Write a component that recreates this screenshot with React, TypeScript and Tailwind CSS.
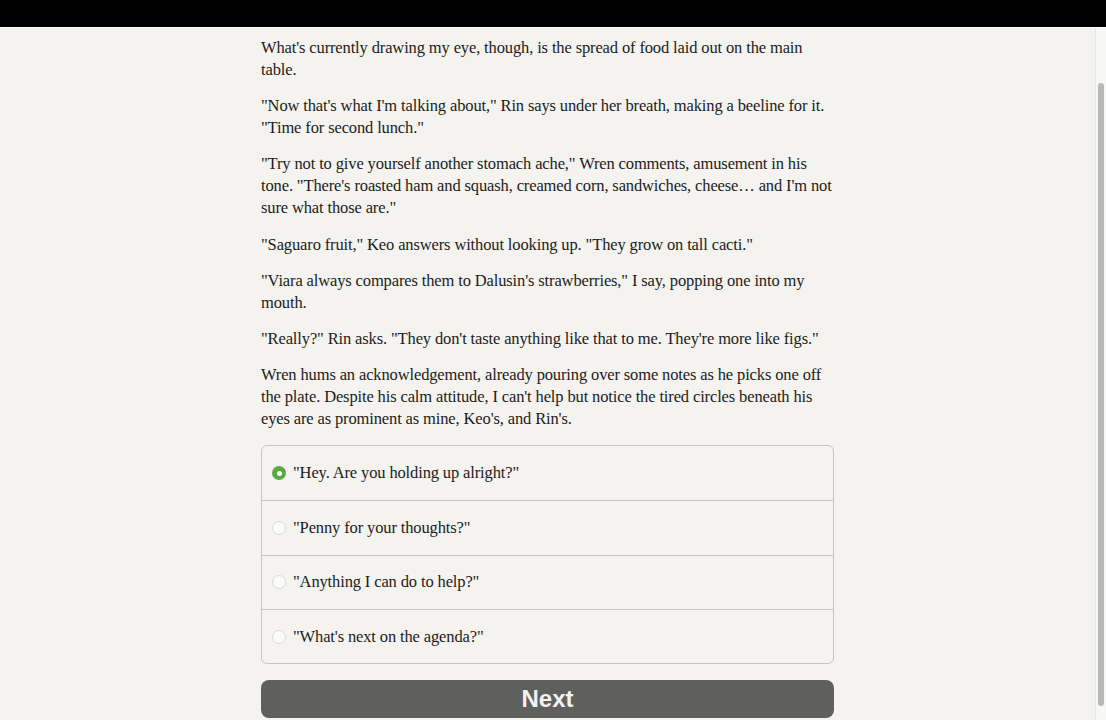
import { useState } from "react";

const paragraphs = [
  `What's currently drawing my eye, though, is the spread of food laid out on the main table.`,
  `"Now that's what I'm talking about," Rin says under her breath, making a beeline for it. "Time for second lunch."`,
  `"Try not to give yourself another stomach ache," Wren comments, amusement in his tone. "There's roasted ham and squash, creamed corn, sandwiches, cheese… and I'm not sure what those are."`,
  `"Saguaro fruit," Keo answers without looking up. "They grow on tall cacti."`,
  `"Viara always compares them to Dalusin's strawberries," I say, popping one into my mouth.`,
  `"Really?" Rin asks. "They don't taste anything like that to me. They're more like figs."`,
  `Wren hums an acknowledgement, already pouring over some notes as he picks one off the plate. Despite his calm attitude, I can't help but notice the tired circles beneath his eyes are as prominent as mine, Keo's, and Rin's.`,
];

const choices = [
  `"Hey. Are you holding up alright?"`,
  `"Penny for your thoughts?"`,
  `"Anything I can do to help?"`,
  `"What's next on the agenda?"`,
];

export default function App() {
  const [selected, setSelected] = useState(0);

  return (
    <div className="h-[720px] flex flex-col bg-[#f4f3ef] overflow-hidden">
      {/* top bar */}
      <div className="h-[28px] bg-black border-b border-white shrink-0" />

      <div className="flex flex-1 min-h-0">
        {/* story column */}
        <main className="flex-1 flex justify-center pt-[9px]">
          <div className="w-[573px] font-['Liberation_Serif',serif] text-[16.5px] tracking-[-0.008em] leading-[22px] text-[#1c1c1c]">
            <div className="flex flex-col gap-[14.2px]">
              {paragraphs.map((p, i) => (
                <p key={i}>{p}</p>
              ))}
            </div>

            {/* choices */}
            <div className="mt-[15px] border border-[#c6c4be] rounded-[6px] overflow-hidden">
              {choices.map((c, i) => (
                <button
                  key={i}
                  onClick={() => setSelected(i)}
                  className={`w-full h-[54.25px] flex items-center gap-[7px] pl-[10px] text-left ${
                    i > 0 ? "border-t border-[#c6c4be]" : ""
                  }`}
                >
                  {selected === i ? (
                    <span className="w-[14px] h-[14px] rounded-full bg-[#5aa844] flex items-center justify-center">
                      <span className="w-[5px] h-[5px] rounded-full bg-white" />
                    </span>
                  ) : (
                    <span className="w-[14px] h-[14px] rounded-full bg-[#fbfbf9] border border-[#dcdad5]" />
                  )}
                  <span>{c}</span>
                </button>
              ))}
            </div>

            <button className="mt-[16px] w-full h-[38px] rounded-[8px] bg-[#5f5f5d] text-[#f2f2f0] font-['Liberation_Sans',sans-serif] font-bold text-[24px] tracking-normal flex items-center justify-center">
              Next
            </button>
          </div>
        </main>

        {/* scrollbar */}
        <div className="w-[11px] shrink-0 bg-[#f7f7f5] border-l border-[#e6e5e1] pt-[55px] pb-[14px] flex justify-center">
          <div className="w-[6px] h-full rounded-full bg-[#b8b8b6]" />
        </div>
      </div>
    </div>
  );
}
